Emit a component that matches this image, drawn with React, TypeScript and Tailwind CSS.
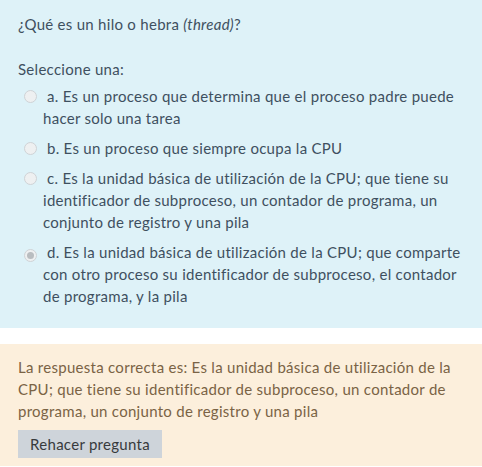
import React from 'react'

const options = [
  { key: 'a', text: 'Es un proceso que determina que el proceso padre puede hacer solo una tarea' },
  { key: 'b', text: 'Es un proceso que siempre ocupa la CPU' },
  {
    key: 'c',
    text: 'Es la unidad básica de utilización de la CPU; que tiene su identificador de subproceso, un contador de programa, un conjunto de registro y una pila',
  },
  {
    key: 'd',
    text: 'Es la unidad básica de utilización de la CPU; que comparte con otro proceso su identificador de subproceso, el contador de programa, y la pila',
    checked: true,
  },
]

function Radio({ checked }: { checked?: boolean }) {
  return (
    <span className="inline-flex align-[-1px] w-[13px] h-[13px] mr-[10px] rounded-full border border-[#cfd3d6] bg-[#eef0f1] items-center justify-center">
      {checked && <span className="w-[7px] h-[7px] rounded-full bg-[#b9bdc0]" />}
    </span>
  )
}

export default function App() {
  return (
    <div className="w-[482px] h-[467px] bg-white font-['Lato',sans-serif] text-[15px] leading-[22px] tracking-[0.28px]">
      <section className="bg-[#def2f8] text-[#3e5060] px-[18px] pt-[13px] pb-[21px]">
        <p>
          ¿Qué es un hilo o hebra <em>(thread)</em>?
        </p>
        <p className="mt-[23px]">Seleccione una:</p>
        <div className="mt-[5px] flex flex-col gap-[8px]">
          {options.map(o => (
            <div key={o.key} className="pl-[25px] -indent-[19px]">
              <Radio checked={o.checked} />
              {`${o.key}. ${o.text}`}
            </div>
          ))}
        </div>
      </section>
      <section className="mt-[16px] bg-[#fcefdc] text-[#7a6345] px-[18px] pt-[12px] pb-[8px]">
        <p>
          La respuesta correcta es: Es la unidad básica de utilización de la CPU; que tiene su
          identificador de subproceso, un contador de programa, un conjunto de registro y una pila
        </p>
        <button className="mt-[8px] w-[144px] h-[28px] bg-[#ced4da] text-[#373a3c] text-[15px]">
          Rehacer pregunta
        </button>
      </section>
    </div>
  )
}
